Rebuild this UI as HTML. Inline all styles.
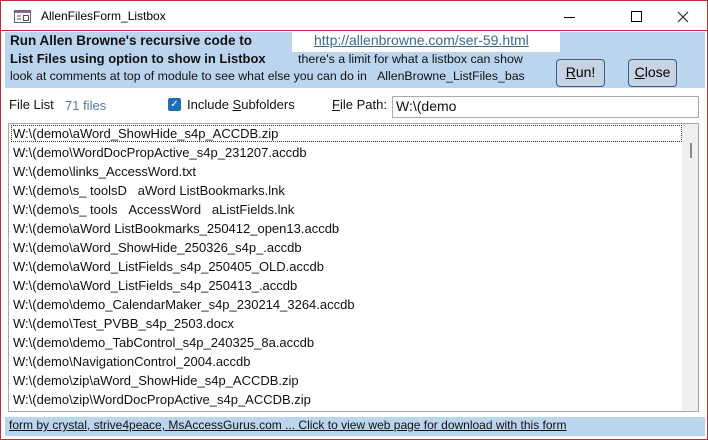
<!DOCTYPE html>
<html><head><meta charset="utf-8"><style>
*{margin:0;padding:0;box-sizing:border-box}
body{width:708px;height:440px;background:#fff;font-family:"Liberation Sans","DejaVu Sans",sans-serif;position:relative;overflow:hidden;border:1px solid #c42b3a}
.a{position:absolute;white-space:nowrap}
.hdr{left:4px;top:31px;width:700px;height:56px;background:#bcd5ee}
.btn{border:1px solid #3b5a86;border-radius:4px;background:#c6d3e2;font-size:14px;text-align:center;line-height:24px}
.list{left:7px;top:122px;width:691px;height:289px;border:1px solid #a8a8a8}
.it{position:absolute;left:4px;font-size:13px;color:#111}
</style></head><body>
<div style="position:absolute;left:0;top:29px;width:708px;height:1px;background:#c42b3a"></div>
<svg class="a" style="left:13px;top:9px" width="18" height="14"><rect x="0.5" y="0.5" width="16" height="12" fill="#fff" stroke="#6a5a80"/><rect x="1" y="1" width="15" height="2" fill="#8a6aa0"/><line x1="3" y1="6" x2="7" y2="6" stroke="#555"/><line x1="3" y1="9" x2="7" y2="9" stroke="#555"/><rect x="9.5" y="5.5" width="5" height="5" fill="none" stroke="#555"/></svg>
<div class="a" style="left:40px;top:8px;font-size:12px;color:#000">AllenFilesForm_Listbox</div>
<div class="a" style="left:563px;top:16px;width:11px;height:1px;background:#000"></div>
<div class="a" style="left:630px;top:10px;width:11px;height:11px;border:1px solid #000"></div>
<svg class="a" style="left:676px;top:10px" width="12" height="12"><path d="M1 1L11 11M11 1L1 11" stroke="#222" stroke-width="1.1"/></svg>
<div class="a hdr"></div>
<div class="a" style="left:291px;top:31px;width:268px;height:20px;background:#fff"></div>
<div class="a" style="left:313px;top:31px;font-size:14px;color:#3a6a90;text-decoration:underline">http://allenbrowne.com/ser-59.html</div>
<div class="a" style="left:9px;top:32px;font-size:13.5px;font-weight:bold;color:#111">Run Allen Browne's recursive code to</div>
<div class="a" style="left:9px;top:50px;font-size:13px;font-weight:bold;color:#111">List Files using option to show in Listbox</div>
<div class="a" style="left:297px;top:51px;font-size:12.4px;color:#111">there's a limit for what a listbox can show</div>
<div class="a" style="left:9px;top:68px;font-size:12.3px;color:#111">look at comments at top of module to see what else you can do in &nbsp;&nbsp;AllenBrowne_ListFiles_bas</div>
<div class="a btn" style="left:555px;top:58px;width:49px;height:28px"><u>R</u>un!</div>
<div class="a btn" style="left:627px;top:58px;width:49px;height:28px"><u>C</u>lose</div>
<div class="a" style="left:8px;top:96px;font-size:13px;color:#111">File List</div>
<div class="a" style="left:64px;top:97px;font-size:13px;color:#5a7a9a">71 files</div>
<div class="a" style="left:167px;top:97px;width:13px;height:13px;background:#1f6fb8;border-radius:2px;color:#fff;font-size:10px;line-height:13px;text-align:center">✓</div>
<div class="a" style="left:186px;top:96px;font-size:13px;color:#111">Include <u>S</u>ubfolders</div>
<div class="a" style="left:331px;top:96px;font-size:13px;color:#111"><u>F</u>ile Path:</div>
<div class="a" style="left:391px;top:95px;width:307px;height:22px;border:1px solid #aaa;font-size:14px;padding:1px 3px;color:#111">W:\(demo</div>
<div class="a list">
<div style="position:absolute;left:2px;top:1px;width:671px;height:17px;border:1px dotted #333"></div>
<div style="position:absolute;right:0;top:0;width:16px;height:287px;background:#efefef"></div>
<div style="position:absolute;right:6px;top:19px;width:2px;height:15px;background:#888"></div>
<div class="it" style="top:2px">W:\(demo\aWord_ShowHide_s4p_ACCDB.zip</div>
<div class="it" style="top:21px">W:\(demo\WordDocPropActive_s4p_231207.accdb</div>
<div class="it" style="top:40px">W:\(demo\links_AccessWord.txt</div>
<div class="it" style="top:59px">W:\(demo\s_ toolsD &nbsp;&nbsp;aWord ListBookmarks.lnk</div>
<div class="it" style="top:78px">W:\(demo\s_ tools &nbsp;&nbsp;AccessWord &nbsp;&nbsp;aListFields.lnk</div>
<div class="it" style="top:97px">W:\(demo\aWord ListBookmarks_250412_open13.accdb</div>
<div class="it" style="top:116px">W:\(demo\aWord_ShowHide_250326_s4p_.accdb</div>
<div class="it" style="top:135px">W:\(demo\aWord_ListFields_s4p_250405_OLD.accdb</div>
<div class="it" style="top:154px">W:\(demo\aWord_ListFields_s4p_250413_.accdb</div>
<div class="it" style="top:173px">W:\(demo\demo_CalendarMaker_s4p_230214_3264.accdb</div>
<div class="it" style="top:192px">W:\(demo\Test_PVBB_s4p_2503.docx</div>
<div class="it" style="top:211px">W:\(demo\demo_TabControl_s4p_240325_8a.accdb</div>
<div class="it" style="top:230px">W:\(demo\NavigationControl_2004.accdb</div>
<div class="it" style="top:249px">W:\(demo\zip\aWord_ShowHide_s4p_ACCDB.zip</div>
<div class="it" style="top:268px">W:\(demo\zip\WordDocPropActive_s4p_ACCDB.zip</div>
</div>
<div class="a" style="left:4px;top:416px;width:700px;height:19px;background:#bcd5ee"></div>
<div class="a" style="left:8px;top:417px;font-size:12px;color:#111;text-decoration:underline">form by crystal, strive4peace, MsAccessGurus.com ... Click to view web page for download with this form</div>
</body></html>
